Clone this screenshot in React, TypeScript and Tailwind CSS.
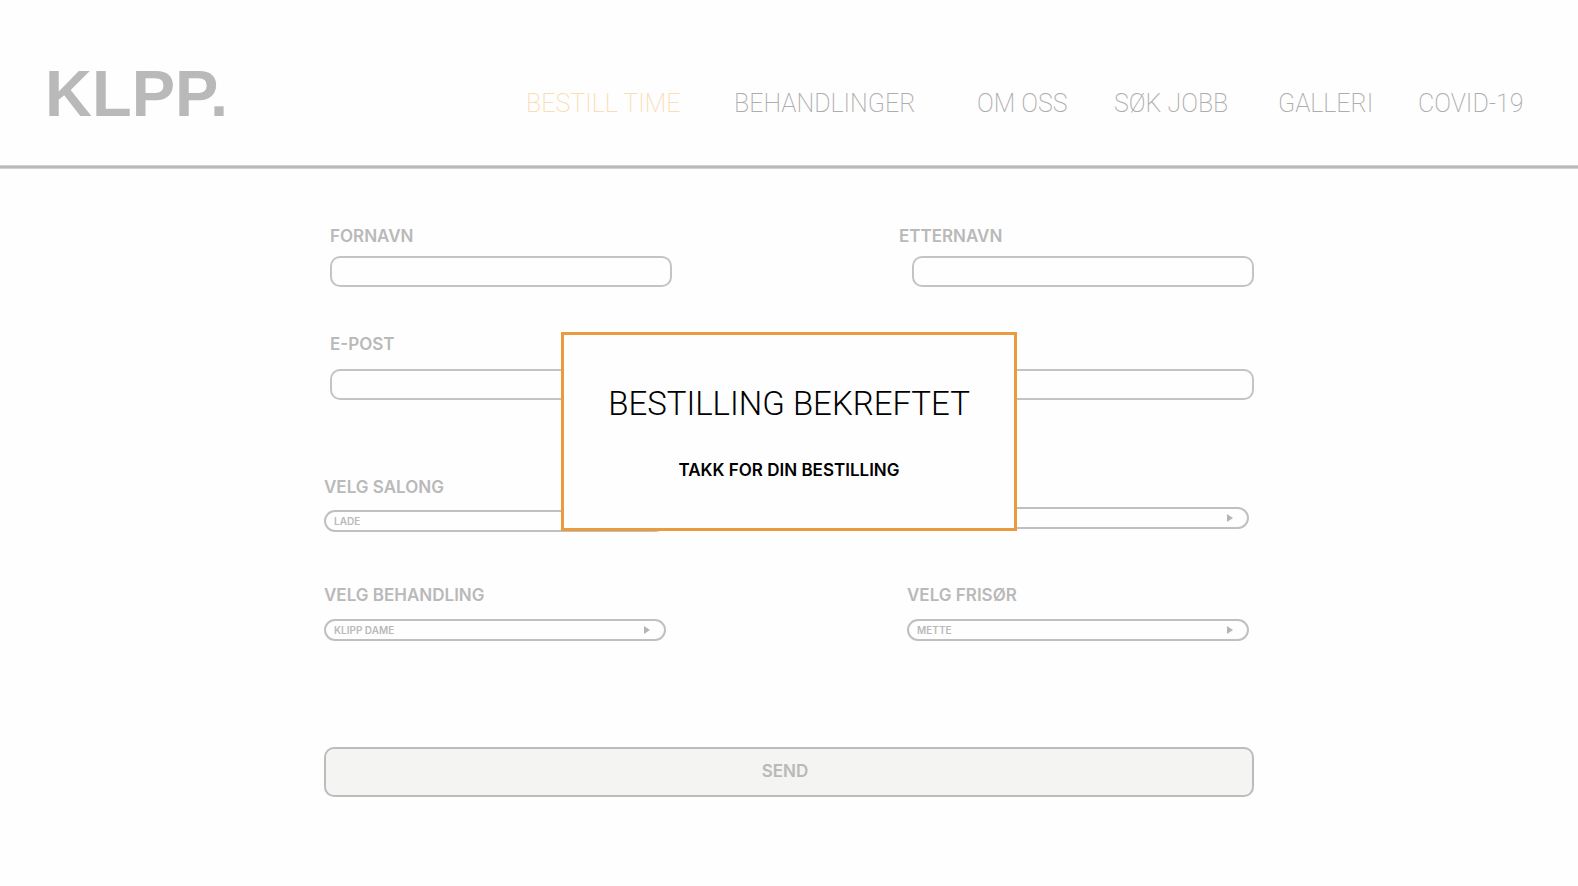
import type { ReactNode } from "react";

const navItems = [
  { label: "BESTILL TIME", href: "#bestill", active: true },
  { label: "BEHANDLINGER", href: "#behandlinger" },
  { label: "OM OSS", href: "#om-oss" },
  { label: "SØK JOBB", href: "#jobb" },
  { label: "GALLERI", href: "#galleri" },
  { label: "COVID-19", href: "#covid-19" },
];

function Label({ id, children }: { id: string; children: ReactNode }) {
  return (
    <label htmlFor={id} className="text-[17px] leading-5 font-semibold">
      {children}
    </label>
  );
}

function TextInput({ id, name }: { id: string; name?: string }) {
  return (
    <input
      id={id}
      type="text"
      aria-label={name}
      className="h-[31px] w-[342px] self-end rounded-[10px] border-2 border-[#c4c4c4] bg-transparent px-3 text-sm outline-none"
    />
  );
}

function Select({ id, name, options }: { id: string; name?: string; options: string[] }) {
  return (
    <div className="relative">
      <select
        id={id}
        aria-label={name}
        className="block h-[22px] w-full appearance-none rounded-full border-2 border-[#c0c0c0] bg-transparent px-2 text-[10px] font-semibold outline-none"
      >
        {options.map((option) => (
          <option key={option}>{option}</option>
        ))}
      </select>
      <svg
        viewBox="0 0 6 8"
        className="pointer-events-none absolute top-[7px] right-4 h-2 w-1.5"
        fill="#b5b5b5"
        aria-hidden="true"
      >
        <path d="M0 0 6 4 0 8Z" />
      </svg>
    </div>
  );
}

export default function App() {
  return (
    <div className="min-h-screen bg-[#fefefe] font-['Inter','Liberation_Sans',sans-serif] text-[#b9b9b9]">
      <header>
        <div className="flex h-[165px] pt-[58px]">
          <a href="#" className="pl-[45px] font-['Liberation_Sans',sans-serif] text-[65px] leading-[72px] font-bold">
            KLPP.
          </a>
          <nav className="ml-auto grid w-2/3 grid-cols-[208fr_243fr_137fr_164fr_140fr_160fr] pt-[30px] font-['Roboto','Liberation_Sans',sans-serif] text-[25px] leading-8 font-extralight whitespace-nowrap">
            {navItems.map((item) => (
              <a key={item.label} href={item.href} className={item.active ? "text-[#fcdcb4]" : "text-[#adadad]"}>
                {item.label}
              </a>
            ))}
          </nav>
        </div>
        <div className="h-1 border-y border-[#d2d2d2] bg-[#b9b9b9]" />
      </header>

      <main className="relative">
        <form className="mx-auto w-full max-w-[930px] pt-[57px]" onSubmit={(e) => e.preventDefault()}>
          <div className="flex justify-between pl-1.5">
            <div className="flex w-[342px] flex-col gap-2.5">
              <Label id="fornavn">FORNAVN</Label>
              <TextInput id="fornavn" />
            </div>
            <div className="flex w-[355px] flex-col gap-2.5">
              <Label id="etternavn">ETTERNAVN</Label>
              <TextInput id="etternavn" />
            </div>
          </div>

          <div className="mt-[47px] flex items-end justify-between pl-1.5">
            <div className="flex w-[342px] flex-col gap-[15px]">
              <Label id="epost">E-POST</Label>
              <TextInput id="epost" />
            </div>
            <TextInput id="telefon" name="Telefon" />
          </div>

          <div className="mt-[77px] flex items-end justify-between pr-[5px]">
            <div className="flex w-[342px] flex-col gap-[13px]">
              <Label id="salong">VELG SALONG</Label>
              <Select id="salong" options={["LADE"]} />
            </div>
            <div className="w-[342px] pb-[3px]">
              <Select id="tid" name="Tid" options={[""]} />
            </div>
          </div>

          <div className="mt-[53px] flex justify-between pr-[5px]">
            <div className="flex w-[342px] flex-col gap-3.5">
              <Label id="behandling">VELG BEHANDLING</Label>
              <Select id="behandling" options={["KLIPP DAME"]} />
            </div>
            <div className="flex w-[342px] flex-col gap-3.5">
              <Label id="frisor">VELG FRISØR</Label>
              <Select id="frisor" options={["METTE"]} />
            </div>
          </div>

          <button
            type="submit"
            className="mt-[106px] h-[50px] w-full rounded-[10px] border-2 border-[#bcbcbc] bg-[#f4f4f3] pr-2 text-[17px] font-semibold"
          >
            SEND
          </button>
        </form>

        <div
          role="dialog"
          aria-labelledby="dialog-title"
          className="absolute top-[163px] left-1/2 flex h-[199px] w-[456px] -translate-x-1/2 flex-col items-center border-3 border-[#eb9b3f] bg-[#fefefe] pt-[49px] text-black"
        >
          <h2
            id="dialog-title"
            className="font-['Roboto','Liberation_Sans',sans-serif] text-[33px] leading-10 font-light whitespace-nowrap"
          >
            BESTILLING BEKREFTET
          </h2>
          <p className="mt-[36px] text-[17px] leading-5 font-semibold">TAKK FOR DIN BESTILLING</p>
        </div>
      </main>
    </div>
  );
}
